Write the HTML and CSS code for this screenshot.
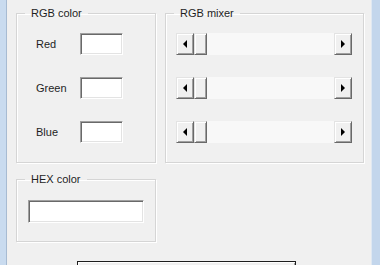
FILE: index.html
```html
<!DOCTYPE html>
<html lang="en">
<head>
    <meta charset="UTF-8">
    <title>Color mixer</title>
    <link rel="stylesheet" href="styles.css">
</head>
<body>
    <div class="frame-left"></div>

    <div class="client">
        <fieldset class="group group-rgb">
            <legend>RGB color</legend>
            <div class="group-body rgb-rows">
                <label class="row-label" for="red">Red</label>
                <input class="edit" type="text" id="red">
                <label class="row-label" for="green">Green</label>
                <input class="edit" type="text" id="green">
                <label class="row-label" for="blue">Blue</label>
                <input class="edit" type="text" id="blue">
            </div>
        </fieldset>

        <fieldset class="group group-mixer">
            <legend>RGB mixer</legend>
            <div class="group-body mixer-rows">
                <div class="scrollbar">
                    <span class="sb-btn"><span class="arrow arrow-left"></span></span>
                    <span class="sb-track"><span class="sb-thumb"></span></span>
                    <span class="sb-btn"><span class="arrow arrow-right"></span></span>
                </div>
                <div class="scrollbar">
                    <span class="sb-btn"><span class="arrow arrow-left"></span></span>
                    <span class="sb-track"><span class="sb-thumb"></span></span>
                    <span class="sb-btn"><span class="arrow arrow-right"></span></span>
                </div>
                <div class="scrollbar">
                    <span class="sb-btn"><span class="arrow arrow-left"></span></span>
                    <span class="sb-track"><span class="sb-thumb"></span></span>
                    <span class="sb-btn"><span class="arrow arrow-right"></span></span>
                </div>
            </div>
        </fieldset>

        <fieldset class="group group-hex">
            <legend>HEX color</legend>
            <div class="group-body hex-body">
                <input class="edit edit-hex" type="text" id="hex">
            </div>
        </fieldset>

        <button class="default-btn" type="button"></button>
    </div>

    <div class="frame-right"></div>
</body>
</html>
```

FILE: styles.css
```css
* {
    box-sizing: border-box;
}

html, body {
    height: 100%;
}

body {
    margin: 0;
    display: flex;
    overflow: hidden;
    background: #f0f0f0;
    color: #1e1e1e;
    font-family: "Liberation Sans", Arial, sans-serif;
    font-size: 11px;
}

.frame-left {
    width: 7px;
    background: #c9dbef;
    border-right: 1px solid #a7bbd2;
}

.frame-right {
    width: 9px;
    background: #c3d6ec;
    border-left: 1px solid #dfe8f2;
}

.client {
    flex: 1;
    padding: 6px 0 0 9px;
    display: grid;
    grid-template-columns: 140px 199px;
    grid-template-rows: 157px 70px auto;
    column-gap: 9px;
    row-gap: 9px;
    align-content: start;
}

/* group boxes */
.group {
    margin: 0;
    padding: 0;
    min-width: 0;
    border: 1px solid #d5d5d5;
    box-shadow: inset 1px 1px 0 #fff, 1px 1px 0 #fff;
}

.group legend {
    margin-left: 8px;
    padding: 0 6px;
    line-height: 14px;
}

.group-body {
    display: grid;
    align-items: center;
}

.rgb-rows {
    padding: 13px 0 0 19px;
    grid-template-columns: 44px 43px;
    grid-auto-rows: 22px;
    row-gap: 22px;
}

.row-label {
    line-height: 22px;
}

.mixer-rows {
    padding: 13px 0 0 10px;
    grid-auto-rows: 22px;
    row-gap: 22px;
}

.hex-body {
    padding: 14px 0 0 11px;
}

/* sunken edit boxes */
.edit {
    width: 43px;
    height: 22px;
    margin: 0;
    padding: 0 3px;
    background: #fff;
    font: inherit;
    border: 1px solid;
    border-color: #a0a0a0 #fff #fff #a0a0a0;
    box-shadow: inset 1px 1px 0 #696969, inset -1px -1px 0 #e3e3e3;
    outline: none;
}

.edit-hex {
    width: 116px;
    height: 23px;
}

/* scrollbars */
.scrollbar {
    display: flex;
    width: 176px;
    height: 22px;
}

.sb-btn,
.sb-thumb,
.default-btn {
    background: #f0f0f0;
    border: 1px solid;
    border-color: #e3e3e3 #696969 #696969 #e3e3e3;
    box-shadow: inset 1px 1px 0 #fff, inset -1px -1px 0 #a0a0a0;
}

.sb-btn {
    width: 18px;
    display: flex;
    align-items: center;
    justify-content: center;
}

.sb-track {
    flex: 1;
    background: #f8f8f8;
}

.sb-thumb {
    display: block;
    width: 13px;
    height: 100%;
}

.arrow {
    width: 0;
    height: 0;
    border-top: 4px solid transparent;
    border-bottom: 4px solid transparent;
}

.arrow-left {
    border-right: 4px solid #000;
}

.arrow-right {
    border-left: 4px solid #000;
}

/* default push button */
.default-btn {
    grid-column: 1 / 3;
    justify-self: start;
    width: 219px;
    height: 23px;
    margin: 10px 0 0 61px;
    padding: 0;
    border-color: #1e1e1e;
    outline: none;
}
```
